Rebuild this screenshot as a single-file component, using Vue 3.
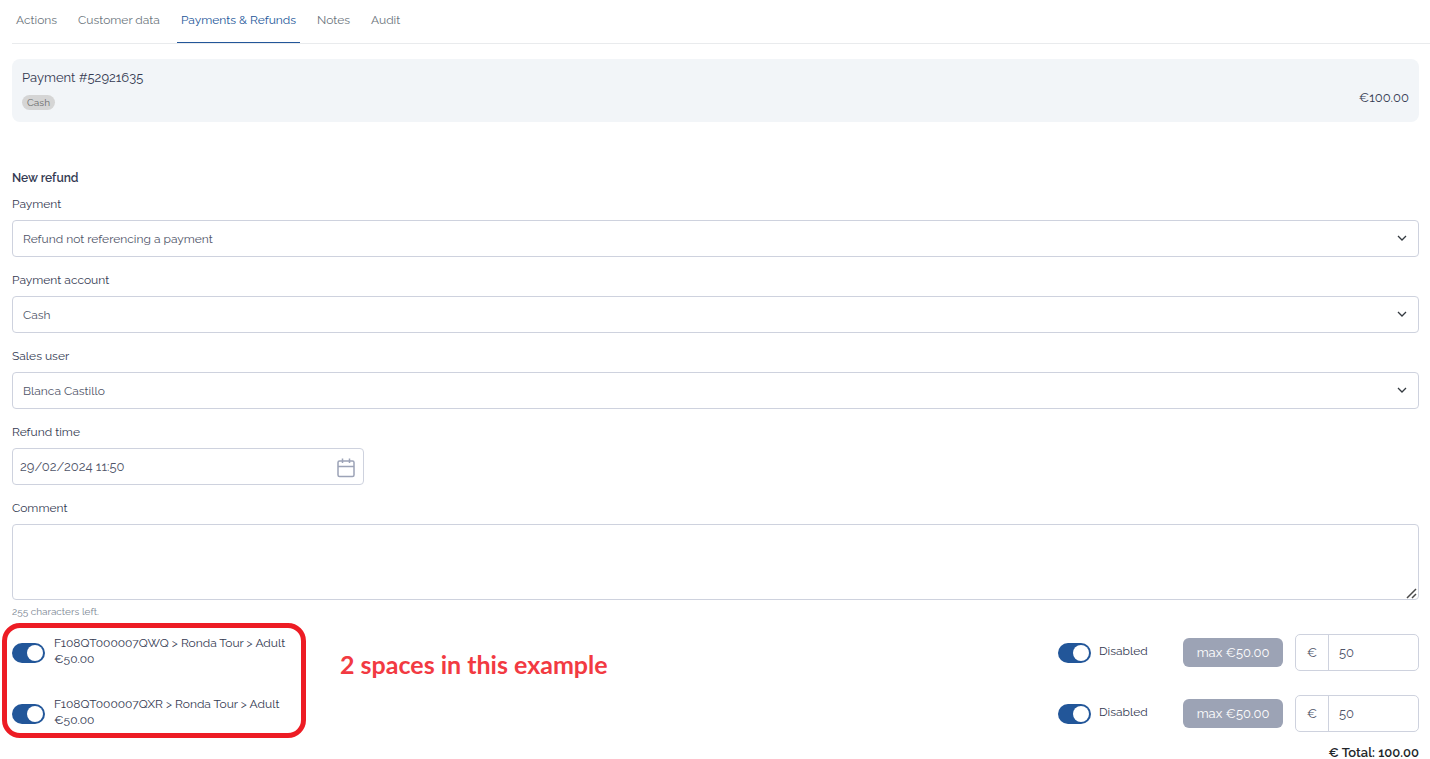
<template>
  <div class="page">
    <nav class="tabs">
      <a
        v-for="tab in tabs"
        :key="tab"
        href="#"
        class="tab"
        :class="{ active: tab === activeTab }"
        @click.prevent="activeTab = tab"
      >{{ tab }}</a>
    </nav>

    <main class="content">
      <section class="payment-card">
        <div>
          <div class="payment-title">Payment #52921635</div>
          <span class="badge">Cash</span>
        </div>
        <div class="payment-amount">€100.00</div>
      </section>

      <form @submit.prevent>
        <h2>New refund</h2>

        <div v-for="field in selects" :key="field.id" class="field">
          <label :for="field.id">{{ field.label }}</label>
          <div class="control">
            <select :id="field.id" v-model="field.value">
              <option>{{ field.value }}</option>
            </select>
            <svg class="chevron" viewBox="0 0 10 6" width="10" height="6">
              <path d="M1 1l4 4 4-4" fill="none" stroke="#343a40" stroke-width="1.3" />
            </svg>
          </div>
        </div>

        <div class="field">
          <label for="time">Refund time</label>
          <div class="control date">
            <input id="time" v-model="refundTime" type="text" />
            <svg class="calendar" viewBox="0 0 18 20" width="18" height="20" fill="none" stroke="#9ca3b7" stroke-width="1.5">
              <rect x="1" y="3" width="16" height="15.5" rx="1.5" />
              <path d="M1 8.5h16M5.5 0.5v4.5M12.5 0.5v4.5" />
            </svg>
          </div>
        </div>

        <div class="field comment">
          <label for="comment">Comment</label>
          <div class="control">
            <textarea id="comment" v-model="comment" maxlength="255"></textarea>
            <svg class="grip" viewBox="0 0 11 11" width="11" height="11">
              <path d="M1 10l9-9M6 10l4-4" fill="none" stroke="#4a4a4a" stroke-width="1.5" />
            </svg>
          </div>
          <small>{{ 255 - comment.length }} characters left.</small>
        </div>

        <div class="items">
          <div v-for="item in items" :key="item.code" class="item">
            <label class="item-name">
              <input v-model="item.refund" type="checkbox" class="switch" />
              <span>{{ item.code }} &gt; Ronda Tour &gt; Adult<br />€50.00</span>
            </label>
            <label class="item-state">
              <input v-model="item.disabled" type="checkbox" class="switch" />
              <span>Disabled</span>
            </label>
            <button type="button" class="max" @click="item.amount = 50">max €50.00</button>
            <div class="amount">
              <label :for="item.code">€</label>
              <input :id="item.code" v-model="item.amount" type="text" />
            </div>
          </div>
          <div class="marker"></div>
          <div class="note">2 spaces in this example</div>
        </div>

        <div class="total">€ Total: {{ total }}</div>
      </form>
    </main>
  </div>
</template>

<script setup>
import { ref, computed } from 'vue';

const tabs = ['Actions', 'Customer data', 'Payments & Refunds', 'Notes', 'Audit'];
const activeTab = ref('Payments & Refunds');

const selects = ref([
  { id: 'payment', label: 'Payment', value: 'Refund not referencing a payment' },
  { id: 'account', label: 'Payment account', value: 'Cash' },
  { id: 'user', label: 'Sales user', value: 'Blanca Castillo' },
]);

const refundTime = ref('29/02/2024 11:50');
const comment = ref('');

const items = ref([
  { code: 'F108QT000007QWQ', refund: true, disabled: true, amount: 50 },
  { code: 'F108QT000007QXR', refund: true, disabled: true, amount: 50 },
]);

const total = computed(() =>
  items.value.reduce((sum, item) => sum + Number(item.amount), 0).toFixed(2)
);
</script>

<style>
body {
  margin: 0;
  background: #fff;
}
</style>

<style scoped>
.page {
  font-family: Raleway, Lato, "Open Sans", sans-serif;
  font-size: 12px;
  line-height: 20px;
  font-variant-numeric: oldstyle-nums;
  color: #343a52;
}

.page *,
.page {
  box-sizing: border-box;
}

input,
select,
textarea,
button {
  font: inherit;
  font-variant-numeric: inherit;
  color: #4f5468;
  margin: 0;
}

.tabs {
  display: flex;
  gap: 13px;
  margin-left: 12px;
  height: 44px;
  border-bottom: 1px solid #e9ebed;
}

.tab {
  padding: 10px 4px 0;
  height: 43px;
  color: #6c757d;
  text-decoration: none;
}

.tab.active {
  color: #225699;
  border-bottom: 1px solid #225699;
}

.content {
  padding: 15px 11px 0 12px;
}

.payment-card {
  display: flex;
  justify-content: space-between;
  align-items: flex-end;
  height: 63px;
  padding: 8px 10px 12px;
  border-radius: 8px;
  background: #f2f5f8;
}

.payment-title,
.payment-amount {
  font-size: 13px;
}

.payment-amount {
  padding-bottom: 2px;
}

.badge {
  display: block;
  width: fit-content;
  margin-top: 7px;
  padding: 0 5px;
  border-radius: 8px;
  background: #d5d5d5;
  color: #6b6b6b;
  font-size: 10px;
  line-height: 15px;
}

h2 {
  margin: 46px 0 6px;
  font-size: 12px;
  line-height: 20px;
  font-weight: 600;
}

.field {
  margin-bottom: 13px;
}

.field > label {
  display: block;
  margin-bottom: 6px;
}

.control {
  position: relative;
}

.control select,
.control input,
textarea {
  display: block;
  width: 100%;
  height: 37px;
  padding: 0 10px;
  border: 1px solid #ced2de;
  border-radius: 4px;
  background: #fff;
  appearance: none;
}

.control.date {
  width: 352px;
}

.control.date input {
  padding: 0 7px;
  font-size: 13px;
}

.chevron {
  position: absolute;
  top: 15px;
  right: 12px;
  pointer-events: none;
}

.calendar {
  position: absolute;
  top: 10px;
  right: 9px;
}

.field textarea {
  height: 76px;
  resize: none;
}

.grip {
  position: absolute;
  right: 2px;
  bottom: 1px;
  pointer-events: none;
}

.comment small {
  display: block;
  margin-top: 2px;
  font-size: 10px;
  color: #7d8794;
}

.field.comment {
  margin-bottom: 12px;
}

.items {
  position: relative;
  display: flex;
  flex-direction: column;
  gap: 24px;
}

.item {
  display: flex;
  align-items: center;
  height: 37px;
}

.item-name,
.item-state {
  display: flex;
  align-items: center;
  gap: 9px;
  line-height: 16px;
}

.item-name {
  flex: 1;
}

.item-state {
  width: 125px;
  gap: 8px;
}

.item-name span,
.item-state span {
  padding-bottom: 3px;
}

.switch {
  flex: none;
  width: 33px;
  height: 20px;
  border-radius: 10px;
  appearance: none;
  background: #9ca3b7;
}

.switch::before {
  content: "";
  display: block;
  width: 16px;
  height: 16px;
  margin: 2px;
  border-radius: 50%;
  background: #fff;
}

.switch:checked {
  background: #225699;
}

.switch:checked::before {
  margin-left: 15px;
}

.max {
  width: 100px;
  height: 29px;
  padding: 0;
  border: 0;
  border-radius: 6px;
  background: #9ca3b5;
  color: #fff;
  font-size: 13px;
}

.amount {
  display: flex;
  width: 124px;
  height: 37px;
  margin-left: 12px;
  border: 1px solid #ced2de;
  border-radius: 5px;
  font-size: 13px;
}

.amount label {
  width: 33px;
  line-height: 35px;
  text-align: center;
  border-right: 1px solid #ced2de;
  color: #4f5468;
}

.amount input {
  flex: 1;
  min-width: 0;
  padding: 0 10px;
  border: 0;
  background: none;
}

.marker {
  position: absolute;
  top: -11px;
  left: -10px;
  width: 304px;
  height: 115px;
  border: 5px solid #ed1c24;
  border-radius: 18px;
  pointer-events: none;
}

.note {
  position: absolute;
  top: 15px;
  left: 328px;
  font-family: Lato, sans-serif;
  font-size: 25px;
  line-height: 30px;
  font-weight: 700;
  font-variant-numeric: normal;
  color: #f23a42;
}

.total {
  margin-top: 15px;
  line-height: 12px;
  font-size: 13px;
  font-weight: 600;
  text-align: right;
  color: #212529;
}
</style>
